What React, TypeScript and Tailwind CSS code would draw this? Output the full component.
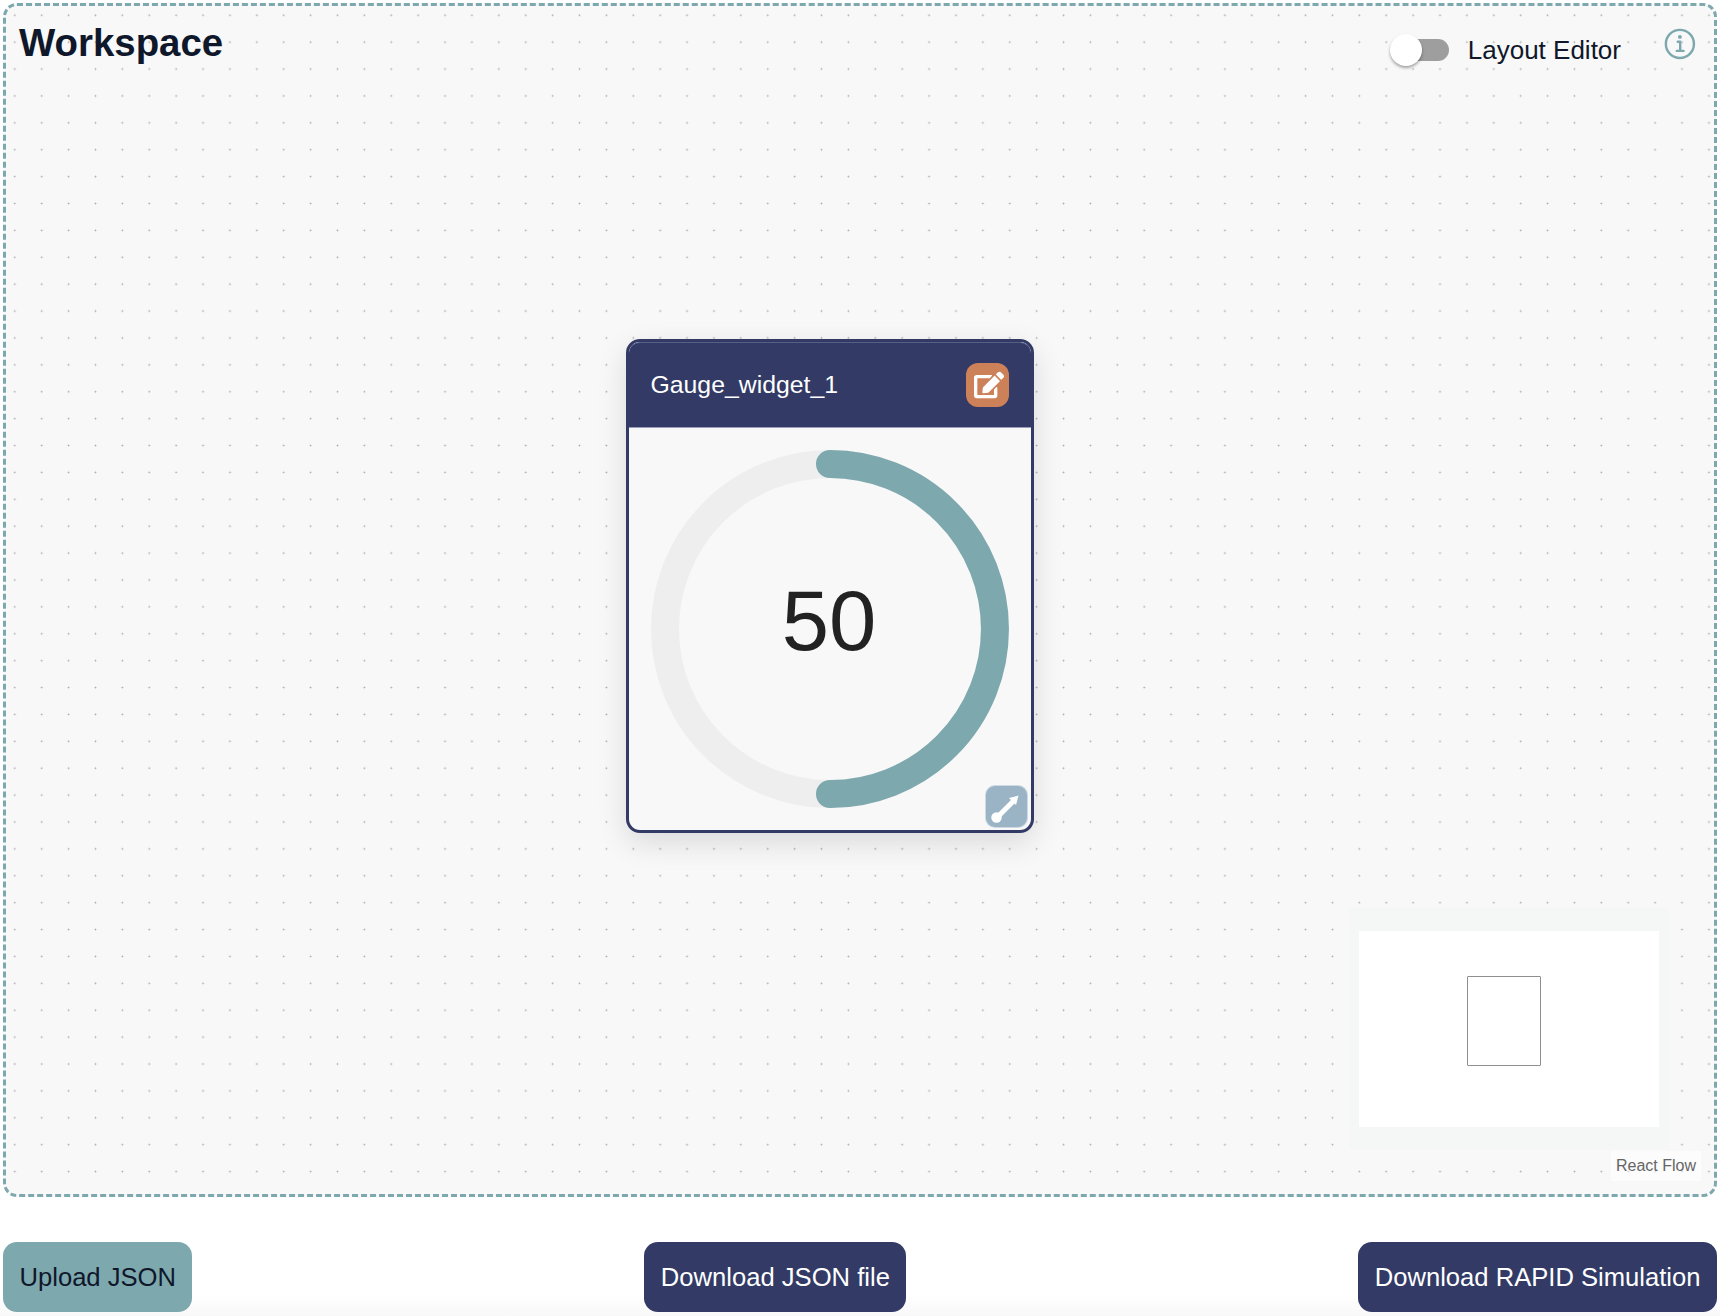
import { FaEdit } from "react-icons/fa";
import { IoInformationCircleOutline } from "react-icons/io5";

const font = "font-['Liberation_Sans',Arial,sans-serif]";

const ActionButton = ({ label, light }: { label: string; light?: boolean }) => (
    <button
        type="button"
        className={
            light
                ? "h-[70px] rounded-[14px] bg-[#7da8ae] px-[16.5px] text-[25.6px] text-[#0f172a]"
                : "h-[70px] rounded-[14px] bg-[#323a65] px-[16.5px] text-[25.6px] text-white"
        }
    >
        {label}
    </button>
);

const Gauge = () => (
    <svg viewBox="0 0 358 358" className="h-[358px] w-[358px]">
        <circle cx="179" cy="179" r="165" fill="none" stroke="#eeeeee" strokeWidth="28" />
        <path
            d="M179 14 A165 165 0 0 1 179 344"
            fill="none"
            stroke="#7da8ae"
            strokeWidth="28"
            strokeLinecap="round"
        />
    </svg>
);

const WidgetNode = () => (
    <div className="absolute left-[620px] top-[333px] flex h-[494px] w-[408px] flex-col overflow-hidden rounded-[14px] border-[3px] border-[#323a65] bg-[#f8f8f8] shadow-[0_10px_30px_rgba(0,0,0,0.12)]">
        <div className="flex h-[86px] shrink-0 items-center justify-between rounded-t-[11px] border-b border-t border-b-[#9a9dba] border-t-[#565d86] bg-[#323a65] pl-[21.5px] pr-[22px] text-[24.8px] text-white">
            <span>Gauge_widget_1</span>
            <button
                type="button"
                className="flex h-[44px] w-[43px] items-center justify-center rounded-[12px] bg-[#cc8159]"
            >
                <FaEdit size={30} className="ml-[2px] text-white" />
            </button>
        </div>
        <div className="relative flex-1 pl-[22px] pt-[22px]">
            <Gauge />
            <span className="absolute left-[21px] top-[150px] w-[358px] text-center text-[85px] leading-none text-[#222222]">
                50
            </span>
            <div className="absolute bottom-[2px] right-[3px] flex h-[43px] w-[43px] items-center justify-center rounded-[10px] border border-white/50 bg-[#9ab4c6]">
                <svg viewBox="0 0 32 32" className="h-[32px] w-[32px]" fill="white">
                    <circle cx="5.5" cy="26.5" r="5.2" />
                    <path d="M3.5 25.5 L21.5 7.5 L25 11 L7 29 Z" />
                    <path d="M27.5 4.5 L25 14 L18 7 Z" />
                </svg>
            </div>
        </div>
    </div>
);

const MiniMap = () => (
    <>
        <div className="absolute left-[1343px] top-[902px] flex h-[241px] w-[320px] items-center justify-center bg-[#f5f6f6]">
            <div className="relative h-[196px] w-[300px] bg-white">
                <div className="absolute left-[108px] top-[45px] h-[90px] w-[74px] rounded-[1px] border border-[#8f8f8f]" />
            </div>
        </div>
        <div className="absolute left-[1605px] top-[1145px] flex h-[30px] w-[90px] items-center justify-center bg-white/50 text-[16px] text-[#666666]">
            React Flow
        </div>
    </>
);

const App = () => {
    return (
        <div
            className={`flex h-[1316px] w-[1720px] flex-col justify-between bg-[linear-gradient(to_bottom,#ffffff_1295px,#f8f8f8_1316px)] px-[3px] pb-[4px] pt-[3px] ${font}`}
        >
            <div className="relative h-[1194px] w-[1714px] rounded-[14px] border-[3px] border-dashed border-[#7da8ae] bg-[#f8f8f8] bg-[radial-gradient(circle,#a8a8a8_0.8px,transparent_1.1px)] bg-[size:26.9px_26.9px] bg-[position:22.25px_76.5px]">
                <div className="flex items-start justify-between pl-[13px] pr-[14px] pt-[12px]">
                    <h1 className="text-[38.4px] font-bold leading-[50px] text-[#0f172a]">Workspace</h1>
                    <div className="flex items-center">
                        <div className="relative mr-[19px] mt-[17px] h-[22px] w-[49px] rounded-full bg-[#9e9e9e]">
                            <span className="absolute left-[-10px] top-[-5px] h-[32px] w-[32px] rounded-full bg-white shadow-[0_2px_3px_rgba(0,0,0,0.35)]" />
                        </div>
                        <span className="mt-[17px] text-[26px] leading-[30px] text-[#0f172a]">Layout Editor</span>
                        <IoInformationCircleOutline className="ml-[40px] mt-[5px] h-[39px] w-[39px] text-[#7da8ae]" />
                    </div>
                </div>
                <WidgetNode />
                <MiniMap />
            </div>
            <div className="flex items-center justify-between">
                <ActionButton label="Upload JSON" light />
                <ActionButton label="Download JSON file" />
                <ActionButton label="Download RAPID Simulation" />
            </div>
        </div>
    );
};

export default App;
